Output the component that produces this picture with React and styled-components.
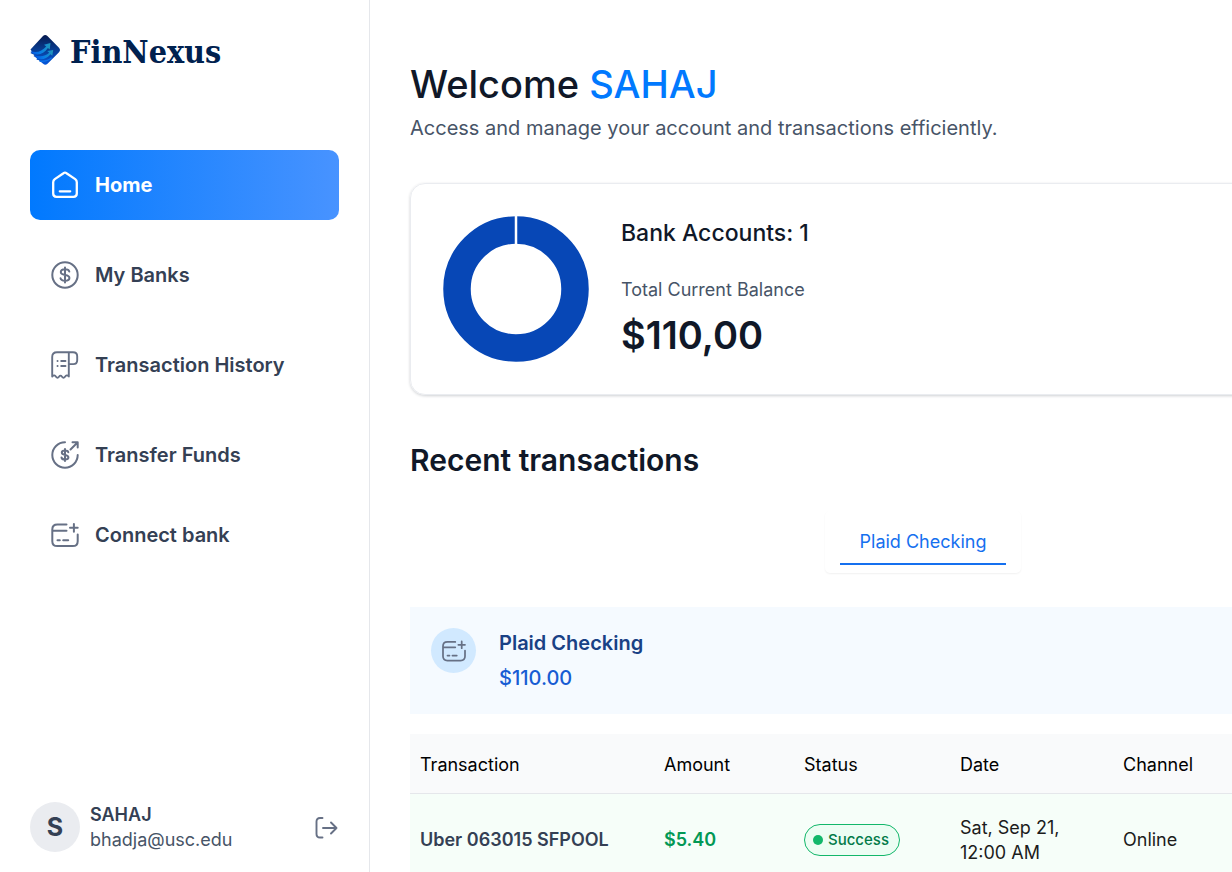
import React from "react";
import styled, { createGlobalStyle } from "styled-components";

const GlobalStyle = createGlobalStyle`
  *, *::before, *::after { box-sizing: border-box; }
  body { margin: 0; background: #fff; color: #000; font-family: Inter, "Liberation Sans", sans-serif; font-size: 18px; line-height: 25px; }
  h1, h2, h3, p { margin: 0; font-weight: inherit; }
  button { font: inherit; border: 0; background: none; padding: 0; cursor: pointer; }
`;

const Page = styled.div`
  display: flex;
  height: 100vh;
  overflow: hidden;
`;

const Sidebar = styled.aside`
  display: flex;
  flex-direction: column;
  justify-content: space-between;
  flex: 0 0 370px;
  padding: 30px 30px 20px;
  border-right: 1px solid #e5e7eb;
`;

const Brand = styled.a`
  display: flex;
  align-items: center;
  gap: 10px;
  height: 40px;
  margin-bottom: 80px;
  color: #00214f;
  text-decoration: none;
`;

const BrandName = styled.span`
  padding-top: 4px;
  font: 700 32px/40px "DejaVu Serif Condensed", "DejaVu Serif", serif;
`;

const Nav = styled.nav`
  display: flex;
  flex-direction: column;
  gap: 20px;
`;

const NavLink = styled.a`
  display: flex;
  align-items: center;
  gap: 15px;
  height: 70px;
  padding: 0 20px;
  border-radius: 10px;
  color: ${(p) => (p.$active ? "#fff" : "#344054")};
  background: ${(p) => (p.$active ? "linear-gradient(90deg, #0179fe 0%, #4893ff 100%)" : "none")};
  font-size: 20px;
  font-weight: ${(p) => (p.$active ? 700 : 600)};
  text-decoration: none;
  svg { color: ${(p) => (p.$active ? "#fff" : "#667085")}; }
`;

const ConnectButton = styled.button`
  display: flex;
  align-items: center;
  gap: 15px;
  height: 50px;
  margin-top: 20px;
  padding: 0 20px;
  color: #344054;
  font-size: 20px;
  font-weight: 600;
  svg { color: #667085; }
`;

const UserFooter = styled.footer`
  display: flex;
  align-items: center;
  gap: 10px;
`;

const Avatar = styled.span`
  display: grid;
  place-items: center;
  width: 50px;
  height: 50px;
  border-radius: 50%;
  background: #eaecf0;
  color: #344054;
  font-size: 25px;
  font-weight: 700;
`;

const UserInfo = styled.div`
  flex: 1;
  color: #475467;
`;

const UserName = styled.p`
  color: #344054;
  font-weight: 600;
`;

const LogoutButton = styled.button`
  display: flex;
  color: #667085;
`;

const Main = styled.main`
  flex: 1;
  min-width: 0;
  overflow: hidden;
  padding: 60px 40px;
`;

const Content = styled.div`
  min-width: 1026px;
`;

const PageTitle = styled.h1`
  color: #101828;
  font-size: 38px;
  font-weight: 500;
  line-height: 48px;
  span { color: #0179fe; }
`;

const Subtitle = styled.p`
  margin-top: 8px;
  color: #475467;
  font-size: 20px;
  line-height: 24px;
`;

const BalanceCard = styled.section`
  display: flex;
  align-items: center;
  gap: 32px;
  margin-top: 43px;
  padding: 32px;
  border: 1px solid #eaecf0;
  border-radius: 15px;
  box-shadow: 0 1px 3px rgba(16, 24, 40, 0.2);
`;

const CardTitle = styled.h2`
  color: #101828;
  font-size: 23px;
  font-weight: 500;
  line-height: 28px;
`;

const BalanceLabel = styled.p`
  margin-top: 30px;
  color: #475467;
  font-weight: 400;
  line-height: 26px;
`;

const BalanceAmount = styled.p`
  margin-top: 8px;
  color: #101828;
  font-size: 38px;
  font-weight: 600;
  line-height: 48px;
`;

const SectionTitle = styled.h2`
  margin-top: 47px;
  color: #101828;
  font-size: 30px;
  font-weight: 600;
  line-height: 36px;
`;

const TabList = styled.div`
  display: flex;
  width: fit-content;
  margin: 33px auto 34px;
  padding: 8px 15px;
  border-radius: 5px;
  box-shadow: 0 1px 2px rgba(0, 0, 0, 0.06);
`;

const Tab = styled.button`
  padding: 10px 20px 8px;
  border-bottom: 2px solid #1570ef;
  color: #1570ef;
  font-weight: 400;
  line-height: 26px;
`;

const AccountBanner = styled.section`
  display: flex;
  gap: 23px;
  padding: 21px;
  background: #f5faff;
`;

const AccountIcon = styled.span`
  display: grid;
  place-items: center;
  width: 45px;
  height: 45px;
  border-radius: 50%;
  background: #d1e9ff;
  color: #667085;
`;

const AccountText = styled.div`
  display: grid;
  gap: 5px;
  font-size: 20px;
  line-height: 30px;
`;

const AccountName = styled.h3`
  color: #194185;
  font-size: 20px;
  font-weight: 600;
`;

const AccountBalance = styled.p`
  color: #175cd3;
  font-weight: 500;
`;

const Transactions = styled.table`
  width: 100%;
  margin-top: 20px;
  border-collapse: collapse;
  table-layout: fixed;
`;

const HeadCell = styled.th`
  width: ${(p) => p.$width || "auto"};
  height: 59px;
  padding: 2px 10px 0;
  border-bottom: 1px solid #e5e7eb;
  background: #f9fafb;
  font-weight: 400;
  text-align: left;
`;

const Cell = styled.td`
  height: 91px;
  padding: 2px 36px 0 10px;
  background: #f6fef9;
  color: ${(p) => p.$color || "#1c1c1c"};
  font-weight: ${(p) => p.$weight || 400};
  white-space: ${(p) => (p.$nowrap ? "nowrap" : "normal")};
`;

const StatusPill = styled.span`
  display: flex;
  align-items: center;
  gap: 5px;
  width: fit-content;
  height: 32px;
  padding: 0 10px 0 8px;
  border: 1px solid #12b76a;
  border-radius: 16px;
  background: #ecfdf3;
  color: #027a48;
  font-size: 15px;
  font-weight: 500;
  &::before { content: ""; width: 10px; height: 10px; border-radius: 50%; background: #12b76a; }
`;

function Icon({ size = 30, stroke = 2, children }) {
  return (
    <svg width={size} height={size} viewBox="0 0 30 30" fill="none" stroke="currentColor" strokeWidth={stroke} strokeLinecap="round" strokeLinejoin="round" aria-hidden="true">
      {children}
    </svg>
  );
}

const HomeIcon = () => (
  <Icon stroke={2.3}>
    <path d="M3.200 12.300c0-1.400.5-2.300 1.600-3.200L13.500 3.200c1-.8 2-.8 3 0l8.700 5.900c1.100.9 1.600 1.800 1.600 3.200v11.200c0 2.300-1 3.300-3.300 3.300h-17C4.200 26.800 3.200 25.800 3.200 23.500zM9.800 21.300h10.400" />
  </Icon>
);

const BanksIcon = () => (
  <Icon>
    <circle cx="15" cy="15" r="12.700" />
    <path d="M15 7.500v15M19.300 11.600c-.3-1.500-1.800-2.300-4.300-2.300s-4.200 1-4.200 2.800c0 2 1.800 2.500 4.200 2.900s4.400 1 4.400 3c0 1.800-1.800 2.800-4.400 2.800s-4.200-.9-4.500-2.600" />
  </Icon>
);

const HistoryIcon = () => (
  <Icon stroke={1.9}>
    <path d="M23 2.300H7C3.600 2.300 2.200 3.800 2.200 7v19.500c1.600-1.800 2.800-1.200 3.800.2s2 1.400 3 0 2-1.400 3 0 2 1.400 3 0 2.400-2 3.800-.2V3M18.800 2.300H23c2.800 0 4.200 1.400 4.200 4v3.900c0 2.600-1.300 3.900-4 3.900h-4.400M7.500 11h.1M7.500 16h.1M11.200 11h4.300M11.200 16h4.300" />
  </Icon>
);

const TransferIcon = () => (
  <Icon>
    <path d="M15 2.300A12.700 12.700 0 1 0 27.700 15M20.500 9.500l7-7M22.500 2.300h5.200v5.200M15 9v12M18.300 12.200c-.3-1.100-1.400-1.700-3.300-1.700s-3.200.8-3.200 2.100c0 1.600 1.300 2 3.200 2.300s3.400.8 3.400 2.400c0 1.400-1.400 2.200-3.400 2.200s-3.300-.7-3.500-2" />
  </Icon>
);

const CardPlusIcon = ({ size }) => (
  <Icon size={size}>
    <path d="M16.500 4.500H7.400C3.800 4.500 2.300 6 2.300 9.400v11.800c0 3.400 1.500 4.900 5.100 4.900h15.200c3.600 0 5.100-1.500 5.100-4.900v-6.700M2.300 10.700h14.200M7.500 20.300h2.300M13.200 20.300h5M20 7.800h7.700M23.900 4v7.700" />
  </Icon>
);

const LogoutIcon = () => (
  <svg width="25" height="25" viewBox="0 0 25 25" fill="none" stroke="currentColor" strokeWidth="1.900" strokeLinecap="round" strokeLinejoin="round" aria-hidden="true">
    <path d="M8.500 3H6Q2.500 3 2.500 6.500v12.500q0 3.500 3.500 3.500h2.500M9 13h13.500M17 7.500l5.500 5.500-5.500 5.500" />
  </svg>
);

const Logo = () => (
  <svg width="30" height="30" viewBox="0 0 30 30" aria-hidden="true">
    <defs>
      <linearGradient id="diamond" x1="0" y1="0" x2="0" y2="1">
        <stop offset="0" stopColor="#061a4f" />
        <stop offset="0.45" stopColor="#083a8c" />
        <stop offset="1" stopColor="#0658dc" />
      </linearGradient>
      <linearGradient id="trail" x1="0" y1="0" x2="1" y2="0">
        <stop offset="0" stopColor="#0754df" />
        <stop offset="0.5" stopColor="#087ee8" />
        <stop offset="1" stopColor="#2398b8" />
      </linearGradient>
    </defs>
    <path d="M13 .9q2.200-1.700 4.400 0L29 12.800q2 2.300 0 4.500L17.500 28.800q-2.200 1.700-4.400 0L8.500 25l-2-.2.600-1.600L3.500 21l1-1L.3 18l1.800-1.300-1.600-2.200z" fill="url(#diamond)" />
    <path d="M.5 16c6 2.500 11.500.3 15.700-4.500L14 9.700 20.500 8l-.8 6.600-1.800-1.500C14 19.200 8 21 2.500 18.500z" fill="url(#trail)" />
    <path d="M4.500 20.300c6 2 11.200.8 14.700-2.500L17.200 16l6-1-.9 5.800-1.800-1.500C16.500 24 11.500 25.500 6.500 23.300z" fill="url(#trail)" />
    <path d="M9.500 26c5 .8 9-.5 12.200-3.200" fill="none" stroke="#0b6fe8" strokeWidth="1.400" />
  </svg>
);

const BalanceChart = () => (
  <svg width="146" height="146" viewBox="0 0 146 146" role="img" aria-label="Share of balance by account">
    <circle cx="73" cy="73" r="59" fill="none" stroke="#0747b6" strokeWidth="27.500" />
    <path d="M73 0v28" stroke="#fff" strokeWidth="2.500" />
  </svg>
);

const navItems = [
  { label: "Home", icon: HomeIcon, active: true },
  { label: "My Banks", icon: BanksIcon },
  { label: "Transaction History", icon: HistoryIcon },
  { label: "Transfer Funds", icon: TransferIcon },
];

const columns = [
  { label: "Transaction", width: "244px" },
  { label: "Amount", width: "140px" },
  { label: "Status", width: "156px" },
  { label: "Date", width: "163px" },
  { label: "Channel" },
];

const transactions = [
  { name: "Uber 063015 SFPOOL", amount: "$5.40", status: "Success", date: "Sat, Sep 21, 12:00 AM", channel: "Online" },
];

export default function App() {
  return (
    <>
      <GlobalStyle />
      <Page>
        <Sidebar>
          <div>
            <Brand href="#"><Logo /><BrandName>FinNexus</BrandName></Brand>
            <Nav>
              {navItems.map(({ label, icon: ItemIcon, active }) => (
                <NavLink key={label} href="#" $active={active}><ItemIcon />{label}</NavLink>
              ))}
            </Nav>
            <ConnectButton type="button"><CardPlusIcon />Connect bank</ConnectButton>
          </div>
          <UserFooter>
            <Avatar>S</Avatar>
            <UserInfo>
              <UserName>SAHAJ</UserName>
              <p>bhadja@usc.edu</p>
            </UserInfo>
            <LogoutButton type="button" aria-label="Log out"><LogoutIcon /></LogoutButton>
          </UserFooter>
        </Sidebar>
        <Main>
          <Content>
            <header>
              <PageTitle>Welcome <span>SAHAJ</span></PageTitle>
              <Subtitle>Access and manage your account and transactions efficiently.</Subtitle>
            </header>
            <BalanceCard>
              <BalanceChart />
              <div>
                <CardTitle>Bank Accounts: 1</CardTitle>
                <BalanceLabel>Total Current Balance</BalanceLabel>
                <BalanceAmount>$110,00</BalanceAmount>
              </div>
            </BalanceCard>
            <SectionTitle>Recent transactions</SectionTitle>
            <TabList role="tablist">
              <Tab type="button" role="tab" aria-selected="true">Plaid Checking</Tab>
            </TabList>
            <AccountBanner>
              <AccountIcon><CardPlusIcon size={26} /></AccountIcon>
              <AccountText>
                <AccountName>Plaid Checking</AccountName>
                <AccountBalance>$110.00</AccountBalance>
              </AccountText>
            </AccountBanner>
            <Transactions>
              <thead>
                <tr>
                  {columns.map((c) => <HeadCell key={c.label} scope="col" $width={c.width}>{c.label}</HeadCell>)}
                </tr>
              </thead>
              <tbody>
                {transactions.map((t) => (
                  <tr key={t.name}>
                    <Cell $color="#344054" $weight={600} $nowrap>{t.name}</Cell>
                    <Cell $color="#039855" $weight={600} $nowrap>{t.amount}</Cell>
                    <Cell $nowrap><StatusPill>{t.status}</StatusPill></Cell>
                    <Cell>{t.date}</Cell>
                    <Cell>{t.channel}</Cell>
                  </tr>
                ))}
              </tbody>
            </Transactions>
          </Content>
        </Main>
      </Page>
    </>
  );
}
